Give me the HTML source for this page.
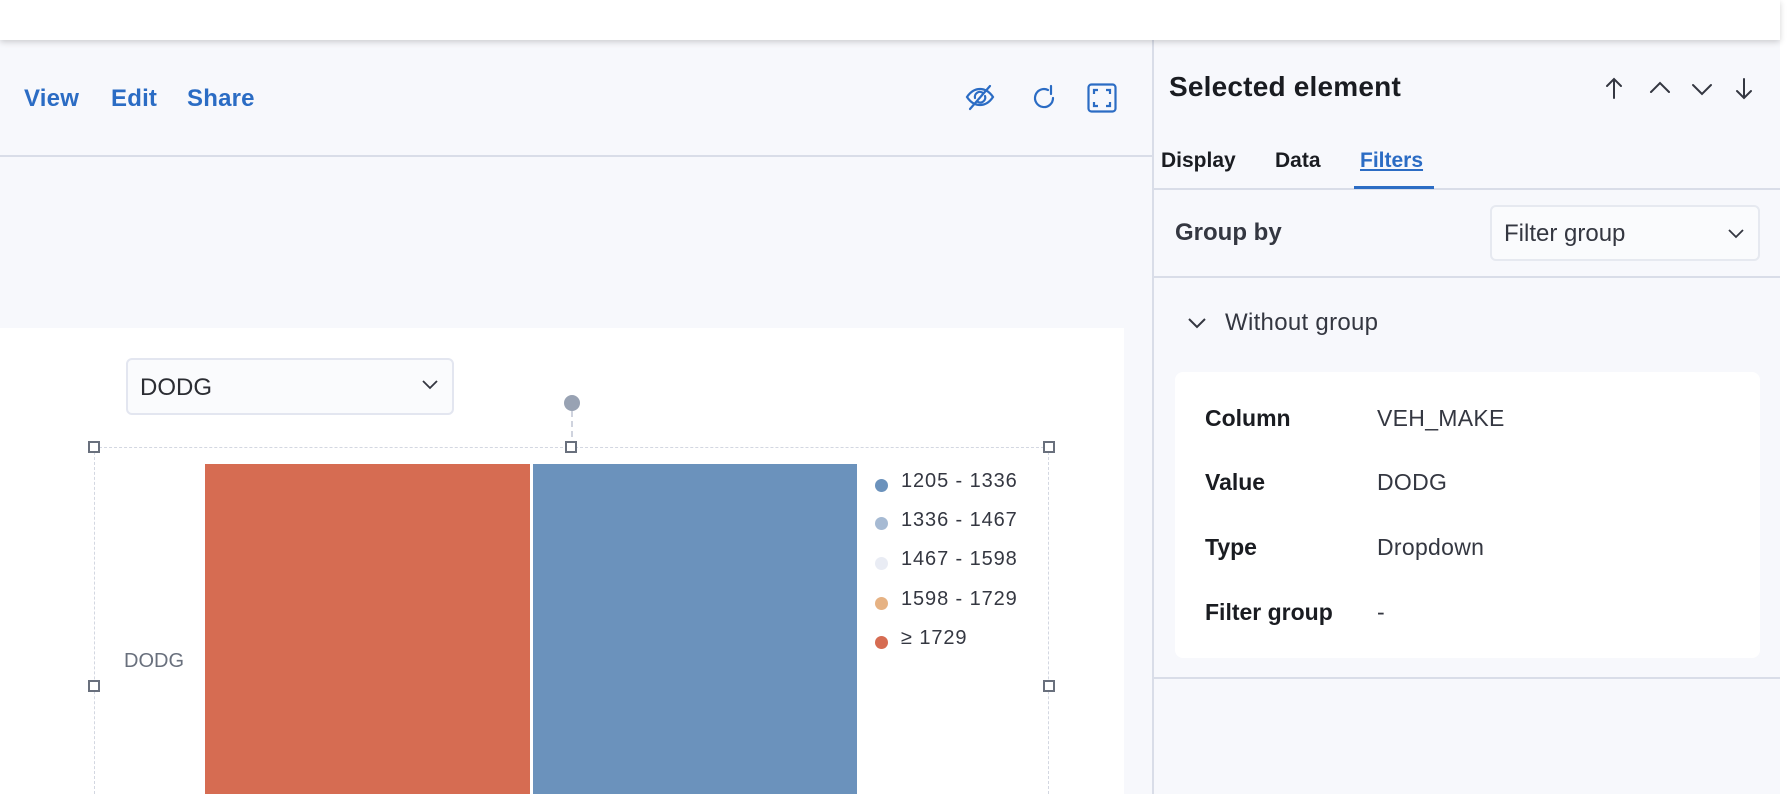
<!DOCTYPE html>
<html><head><meta charset="utf-8"><style>
*{box-sizing:border-box;margin:0;padding:0}
body{width:1788px;height:794px;overflow:hidden;background:#f7f8fc;font-family:"Liberation Sans",sans-serif;position:relative;color:#1a1c21}
.abs{position:absolute}
.top{left:0;top:0;width:1780px;height:40px;background:#fff;box-shadow:0 2px 6px rgba(0,0,0,.18);z-index:5}
.topr{left:1780px;top:0;width:8px;height:794px;background:#fff}
.nav{top:85px;font-size:24px;color:#2b6cc4;font-weight:bold;letter-spacing:0.2px}
.hline{height:2px;background:#d9dde8}
.canvas{left:0;top:328px;width:1124px;height:466px;background:#fff}
.dd{left:126px;top:358px;width:328px;height:57px;border:2px solid #e3e6f0;border-radius:6px;background:#fafbfd;font-size:24px;padding:14px 0 0 12px;color:#2b2d33}
.handle{width:12px;height:12px;border:2px solid #69707d;background:#fff}
.leg{font-size:20px;color:#343741;left:901px;letter-spacing:0.9px}
.dot{width:13px;height:13px;border-radius:50%;left:875px}
.lbl{font-size:23px;font-weight:bold;left:1205px;color:#1a1c21}
.val{font-size:23px;left:1377px;color:#343741;letter-spacing:0.3px}
</style></head><body>
<div class="abs top"></div>
<div class="abs topr"></div>
<div class="abs nav" style="left:24px">View</div>
<div class="abs nav" style="left:111px">Edit</div>
<div class="abs nav" style="left:187px">Share</div>
<svg class="abs" style="left:964px;top:82px" width="32" height="30" viewBox="0 0 32 30" fill="none" stroke="#2b6cc4" stroke-width="2.2" stroke-linecap="round"><path d="M3 15c4-6 8-8 13-8s9 2 13 8c-4 6-8 8-13 8s-9-2-13-8z"/><path d="M11 16a5 5 0 0 1 8-5M21 14a5 5 0 0 1-7 6"/><path d="M6 27L26 4"/></svg>
<svg class="abs" style="left:1031px;top:84px" width="26" height="28" viewBox="0 0 26 28" fill="none" stroke="#2b6cc4" stroke-width="2.2" stroke-linecap="round"><path d="M17 6a9 9 0 1 0 5 8"/><path d="M20 2v8"/></svg>
<svg class="abs" style="left:1087px;top:83px" width="30" height="30" viewBox="0 0 30 30" fill="none" stroke="#2b6cc4" stroke-width="2.2"><rect x="1.5" y="1.5" width="27" height="27" rx="3"/><path d="M7 11V7h4M19 7h4v4M23 19v4h-4M11 23H7v-4"/></svg>
<div class="abs hline" style="left:0;top:155px;width:1153px"></div>
<div class="abs canvas"></div>
<div class="abs" style="left:1152px;top:40px;width:2px;height:754px;background:#d9dde8"></div>
<div class="abs dd">DODG<svg class="abs" style="right:14px;top:20px" width="16" height="10" viewBox="0 0 16 10" fill="none" stroke="#343741" stroke-width="1.8"><path d="M1 1l7 7 7-7"/></svg></div>
<div class="abs" style="left:564px;top:395px;width:16px;height:16px;border-radius:50%;background:#98a2b3"></div>
<div class="abs" style="left:571px;top:411px;height:36px;border-left:2px dashed #cfd3de"></div>
<div class="abs" style="left:94px;top:447px;width:955px;height:347px;border:1.5px dashed #d3d7e1;border-bottom:none"></div>
<div class="abs handle" style="left:88px;top:441px"></div>
<div class="abs handle" style="left:565px;top:441px"></div>
<div class="abs handle" style="left:1043px;top:441px"></div>
<div class="abs handle" style="left:88px;top:680px"></div>
<div class="abs handle" style="left:1043px;top:680px"></div>
<div class="abs" style="left:205px;top:464px;width:325px;height:330px;background:#d66c52"></div>
<div class="abs" style="left:533px;top:464px;width:324px;height:330px;background:#6b92bc"></div>
<div class="abs" style="left:124px;top:650px;font-size:20px;color:#69707d">DODG</div>
<div class="abs dot" style="top:479px;background:#6b92bc"></div><div class="abs leg" style="top:470px">1205 - 1336</div>
<div class="abs dot" style="top:517px;background:#a6bad3"></div><div class="abs leg" style="top:509px">1336 - 1467</div>
<div class="abs dot" style="top:557px;background:#e9ecf4"></div><div class="abs leg" style="top:548px">1467 - 1598</div>
<div class="abs dot" style="top:597px;background:#e6b283"></div><div class="abs leg" style="top:588px">1598 - 1729</div>
<div class="abs dot" style="top:636px;background:#d66c52"></div><div class="abs leg" style="top:627px">≥ 1729</div>
<div class="abs" style="left:1169px;top:71px;font-size:28px;font-weight:bold;letter-spacing:0.2px">Selected element</div>
<svg class="abs" style="left:1602px;top:76px" width="160" height="24" viewBox="0 0 160 24" fill="none" stroke="#343741" stroke-width="2" stroke-linecap="round"><path d="M12 3v19M5 10l7-7 7 7"/><path d="M49 16l9-9 9 9"/><path d="M91 9l9 9 9-9"/><path d="M142 3v19M135 15l7 7 7-7"/></svg>
<div class="abs" style="left:1161px;top:149px;font-size:21px;font-weight:bold">Display</div>
<div class="abs" style="left:1275px;top:149px;font-size:21px;font-weight:bold">Data</div>
<div class="abs" style="left:1360px;top:149px;font-size:21px;font-weight:bold;color:#2b6cc4;text-decoration:underline">Filters</div>
<div class="abs hline" style="left:1154px;top:188px;width:626px"></div>
<div class="abs" style="left:1354px;top:186px;width:80px;height:3px;background:#2b6cc4"></div>
<div class="abs" style="left:1175px;top:219px;font-size:24px;font-weight:bold;color:#343741">Group by</div>
<div class="abs" style="left:1490px;top:205px;width:270px;height:56px;border:2px solid #e6e9f0;border-radius:6px;background:#fafbfd;font-size:24px;padding:13px 0 0 12px;color:#343741">Filter group<svg class="abs" style="right:14px;top:22px" width="16" height="10" viewBox="0 0 16 10" fill="none" stroke="#343741" stroke-width="1.8"><path d="M1 1l7 7 7-7"/></svg></div>
<div class="abs hline" style="left:1154px;top:276px;width:626px"></div>
<svg class="abs" style="left:1187px;top:317px" width="20" height="12" viewBox="0 0 20 12" fill="none" stroke="#343741" stroke-width="2"><path d="M2 2l8 8 8-8"/></svg>
<div class="abs" style="left:1225px;top:309px;font-size:24px;color:#343741;letter-spacing:0.3px">Without group</div>
<div class="abs" style="left:1175px;top:372px;width:585px;height:286px;background:#fff;border-radius:8px"></div>
<div class="abs lbl" style="top:405px">Column</div><div class="abs val" style="top:405px">VEH_MAKE</div>
<div class="abs lbl" style="top:469px">Value</div><div class="abs val" style="top:469px">DODG</div>
<div class="abs lbl" style="top:534px">Type</div><div class="abs val" style="top:534px">Dropdown</div>
<div class="abs lbl" style="top:599px">Filter group</div><div class="abs val" style="top:599px">-</div>
<div class="abs hline" style="left:1154px;top:677px;width:626px"></div>
</body></html>
